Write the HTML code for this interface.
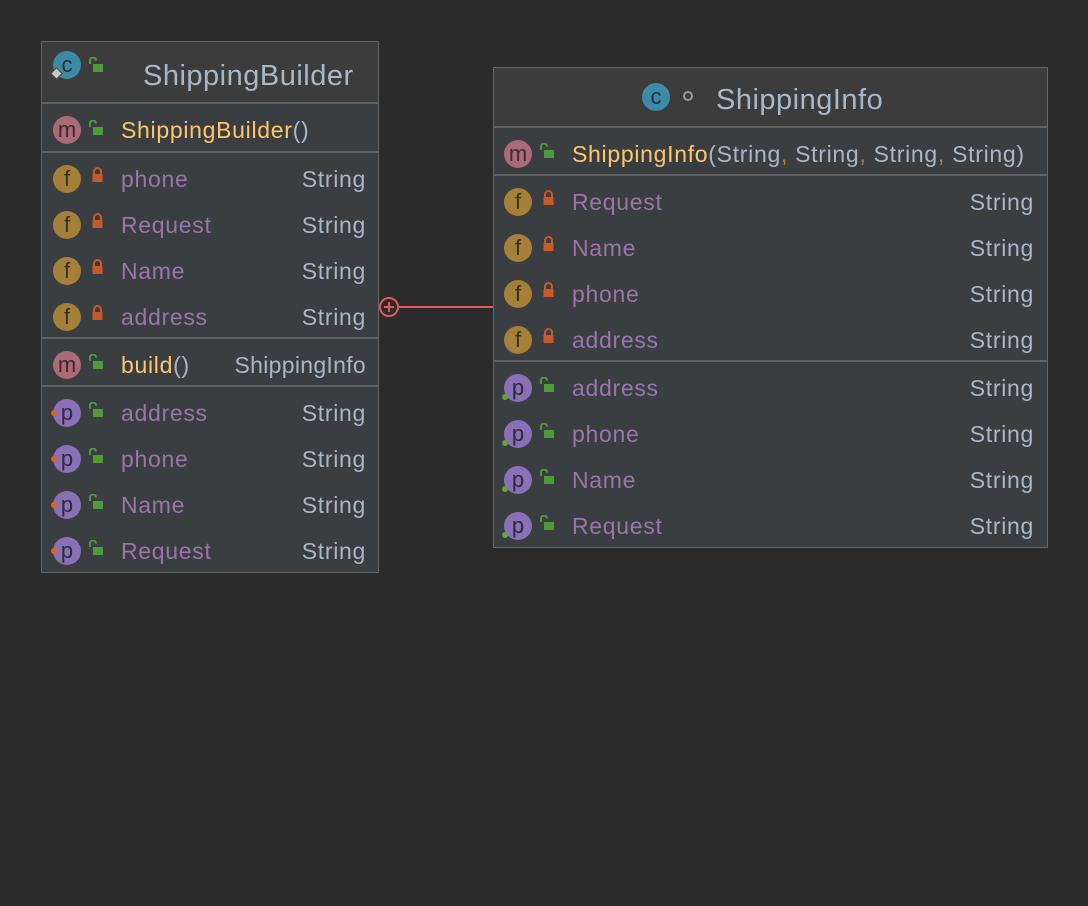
<!DOCTYPE html>
<html><head><meta charset="utf-8"><style>
body{margin:0;width:1088px;height:906px;background:#2b2b2b;overflow:hidden;font-family:"Liberation Sans",sans-serif;position:relative}
.box{position:absolute;background:#3b3e41;border:1px solid #666;box-sizing:border-box}
.hdr{position:absolute;background:#3c3c3c}
.hl{position:absolute;height:2px;background:#626262}
.t{position:absolute;font-size:23px;letter-spacing:0.7px;line-height:46px;white-space:nowrap;color:#a9b7c6}
.n{color:#9876aa}.m{color:#ffc66d}.o{color:#cc7832}
.ic{position:absolute;width:28px;height:28px;border-radius:50%;color:#3a3030;font-size:22px;line-height:1;display:flex;align-items:center;justify-content:center;box-sizing:border-box;padding-top:0px}
.ci{background:#3b8aa6;color:#24313a}
.mi{background:#ab6a78;color:#3a2a2e}
.fi{background:#a48039;color:#3a3020}
.pi{background:#8a70b6;color:#2e2838}
.dot{position:absolute;width:6px;height:6px;border-radius:50%}
svg.lk{position:absolute}
</style></head><body>
<svg width="0" height="0" style="position:absolute"><defs>
<g id="cl"><path d="M3 7V4.5a3.5 3.5 0 0 1 7 0V7" fill="none" stroke="#c75a2b" stroke-width="2"/><rect x="1.5" y="7" width="10" height="8" fill="#c75a2b"/></g>
<g id="op"><path d="M1 7V3.5a3 3 0 0 1 6 0" fill="none" stroke="#4f9a3a" stroke-width="2"/><rect x="4" y="7" width="10" height="8" fill="#4f9a3a"/></g>
</defs></svg>

<!-- Box 1 -->
<div class="box" style="left:41px;top:41px;width:338px;height:532px"></div>
<div class="hdr" style="left:42px;top:42px;width:336px;height:61px"></div>
<div class="hl" style="left:42px;top:102px;width:336px"></div>
<div class="hl" style="left:42px;top:151px;width:336px"></div>
<div class="hl" style="left:42px;top:337px;width:336px"></div>
<div class="hl" style="left:42px;top:385px;width:336px"></div>
<div class="ic ci" style="left:53px;top:51px">c</div>
<div style="position:absolute;left:52px;top:69px;width:7px;height:7px;background:#c8c8c8;transform:rotate(45deg);border:1px solid #3c3c3c"></div>
<svg class="lk" style="left:89px;top:57px" width="16" height="16"><use href="#op"/></svg>
<div class="t" style="left:143px;top:53px;font-size:29px;letter-spacing:0.5px">ShippingBuilder</div>

<div class="ic mi" style="left:53px;top:116px">m</div>
<svg class="lk" style="left:89px;top:120px" width="16" height="16"><use href="#op"/></svg>
<div class="t m" style="left:121px;top:107px">ShippingBuilder<span style="color:#a9b7c6">()</span></div>

<div class="ic fi" style="left:53px;top:165px">f</div><svg class="lk" style="left:91px;top:167px" width="16" height="16"><use href="#cl"/></svg>
<div class="t n" style="left:121px;top:156px">phone</div><div class="t" style="right:722px;top:156px">String</div>
<div class="ic fi" style="left:53px;top:211px">f</div><svg class="lk" style="left:91px;top:213px" width="16" height="16"><use href="#cl"/></svg>
<div class="t n" style="left:121px;top:202px">Request</div><div class="t" style="right:722px;top:202px">String</div>
<div class="ic fi" style="left:53px;top:257px">f</div><svg class="lk" style="left:91px;top:259px" width="16" height="16"><use href="#cl"/></svg>
<div class="t n" style="left:121px;top:248px">Name</div><div class="t" style="right:722px;top:248px">String</div>
<div class="ic fi" style="left:53px;top:303px">f</div><svg class="lk" style="left:91px;top:305px" width="16" height="16"><use href="#cl"/></svg>
<div class="t n" style="left:121px;top:294px">address</div><div class="t" style="right:722px;top:294px">String</div>

<div class="ic mi" style="left:53px;top:351px">m</div><svg class="lk" style="left:89px;top:354px" width="16" height="16"><use href="#op"/></svg>
<div class="t m" style="left:121px;top:342px">build<span style="color:#a9b7c6">()</span></div><div class="t" style="right:722px;top:342px;letter-spacing:0.3px">ShippingInfo</div>

<div class="ic pi" style="left:53px;top:399px">p</div><div class="dot" style="left:51px;top:410px;background:#e5611e"></div><svg class="lk" style="left:89px;top:402px" width="16" height="16"><use href="#op"/></svg>
<div class="t n" style="left:121px;top:390px">address</div><div class="t" style="right:722px;top:390px">String</div>
<div class="ic pi" style="left:53px;top:445px">p</div><div class="dot" style="left:51px;top:456px;background:#e5611e"></div><svg class="lk" style="left:89px;top:448px" width="16" height="16"><use href="#op"/></svg>
<div class="t n" style="left:121px;top:436px">phone</div><div class="t" style="right:722px;top:436px">String</div>
<div class="ic pi" style="left:53px;top:491px">p</div><div class="dot" style="left:51px;top:502px;background:#e5611e"></div><svg class="lk" style="left:89px;top:494px" width="16" height="16"><use href="#op"/></svg>
<div class="t n" style="left:121px;top:482px">Name</div><div class="t" style="right:722px;top:482px">String</div>
<div class="ic pi" style="left:53px;top:537px">p</div><div class="dot" style="left:51px;top:548px;background:#e5611e"></div><svg class="lk" style="left:89px;top:540px" width="16" height="16"><use href="#op"/></svg>
<div class="t n" style="left:121px;top:528px">Request</div><div class="t" style="right:722px;top:528px">String</div>

<!-- connector -->
<svg style="position:absolute;left:376px;top:296px" width="120" height="24">
<circle cx="13" cy="11" r="9" fill="none" stroke="#e0585a" stroke-width="2"/>
<path d="M8 11H18M13 6V16M22 11H117" stroke="#e0585a" stroke-width="2"/>
</svg>

<!-- Box 2 -->
<div class="box" style="left:493px;top:67px;width:555px;height:481px"></div>
<div class="hdr" style="left:494px;top:68px;width:553px;height:58px"></div>
<div class="hl" style="left:494px;top:126px;width:553px"></div>
<div class="hl" style="left:494px;top:174px;width:553px"></div>
<div class="hl" style="left:494px;top:360px;width:553px"></div>
<div class="ic ci" style="left:642px;top:83px">c</div>
<div style="position:absolute;left:683px;top:91px;width:6px;height:6px;border:2px solid #9a9a9a;border-radius:50%"></div>
<div class="t" style="left:716px;top:77px;font-size:29px;letter-spacing:0.5px">ShippingInfo</div>

<div class="ic mi" style="left:504px;top:140px">m</div><svg class="lk" style="left:540px;top:143px" width="16" height="16"><use href="#op"/></svg>
<div class="t m" style="left:572px;top:131px">ShippingInfo<span style="color:#a9b7c6">(String<span class="o">,</span> String<span class="o">,</span> String<span class="o">,</span> String)</span></div>

<div class="ic fi" style="left:504px;top:188px">f</div><svg class="lk" style="left:542px;top:190px" width="16" height="16"><use href="#cl"/></svg>
<div class="t n" style="left:572px;top:179px">Request</div><div class="t" style="right:54px;top:179px">String</div>
<div class="ic fi" style="left:504px;top:234px">f</div><svg class="lk" style="left:542px;top:236px" width="16" height="16"><use href="#cl"/></svg>
<div class="t n" style="left:572px;top:225px">Name</div><div class="t" style="right:54px;top:225px">String</div>
<div class="ic fi" style="left:504px;top:280px">f</div><svg class="lk" style="left:542px;top:282px" width="16" height="16"><use href="#cl"/></svg>
<div class="t n" style="left:572px;top:271px">phone</div><div class="t" style="right:54px;top:271px">String</div>
<div class="ic fi" style="left:504px;top:326px">f</div><svg class="lk" style="left:542px;top:328px" width="16" height="16"><use href="#cl"/></svg>
<div class="t n" style="left:572px;top:317px">address</div><div class="t" style="right:54px;top:317px">String</div>

<div class="ic pi" style="left:504px;top:374px">p</div><div class="dot" style="left:502px;top:394px;background:#59a83c"></div><svg class="lk" style="left:540px;top:377px" width="16" height="16"><use href="#op"/></svg>
<div class="t n" style="left:572px;top:365px">address</div><div class="t" style="right:54px;top:365px">String</div>
<div class="ic pi" style="left:504px;top:420px">p</div><div class="dot" style="left:502px;top:440px;background:#59a83c"></div><svg class="lk" style="left:540px;top:423px" width="16" height="16"><use href="#op"/></svg>
<div class="t n" style="left:572px;top:411px">phone</div><div class="t" style="right:54px;top:411px">String</div>
<div class="ic pi" style="left:504px;top:466px">p</div><div class="dot" style="left:502px;top:486px;background:#59a83c"></div><svg class="lk" style="left:540px;top:469px" width="16" height="16"><use href="#op"/></svg>
<div class="t n" style="left:572px;top:457px">Name</div><div class="t" style="right:54px;top:457px">String</div>
<div class="ic pi" style="left:504px;top:512px">p</div><div class="dot" style="left:502px;top:532px;background:#59a83c"></div><svg class="lk" style="left:540px;top:515px" width="16" height="16"><use href="#op"/></svg>
<div class="t n" style="left:572px;top:503px">Request</div><div class="t" style="right:54px;top:503px">String</div>
</body></html>
